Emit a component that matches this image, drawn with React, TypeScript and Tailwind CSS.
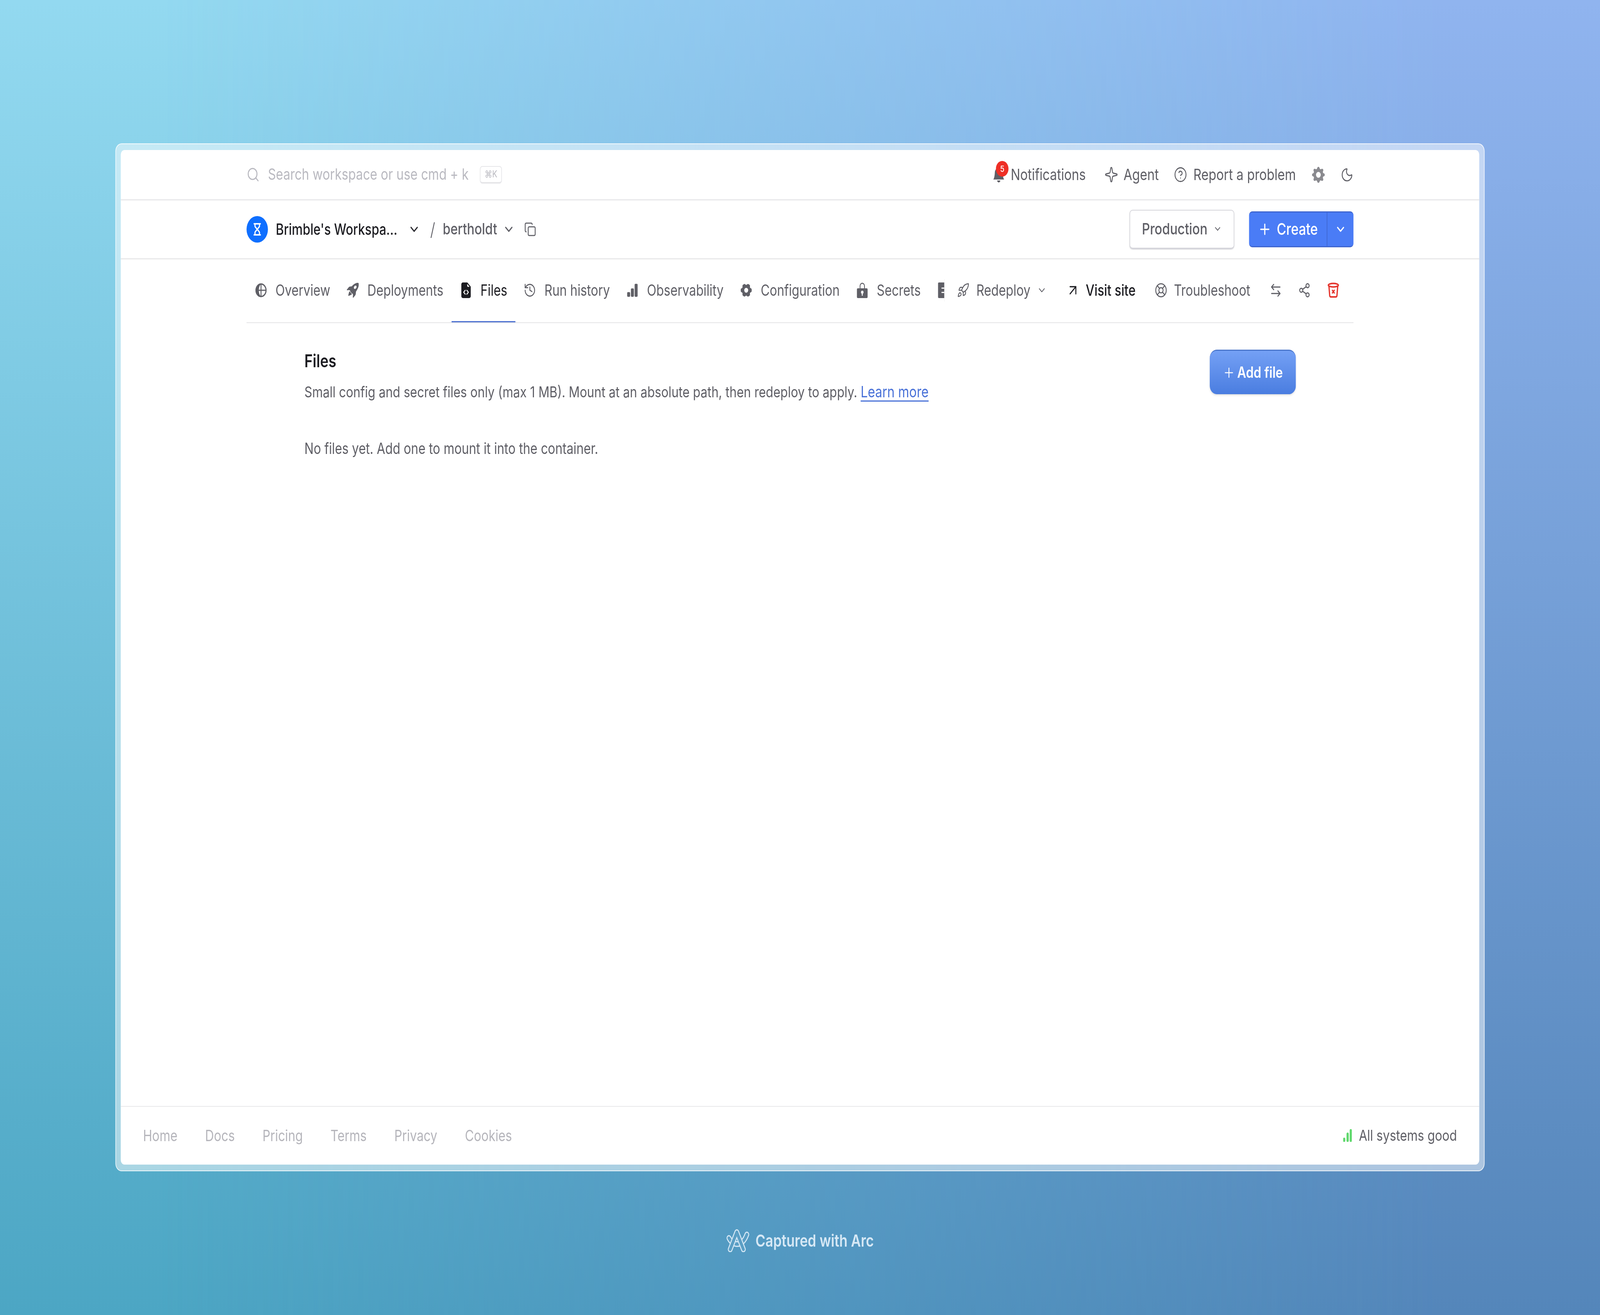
import React from 'react'
import {
  ArrowLeftRight,
  ArrowUpRight,
  ChevronDown,
  CircleHelp,
  Copy,
  History,
  Hourglass,
  LifeBuoy,
  Moon,
  Plus,
  Rocket,
  Search,
  Share2,
  Sparkle,
} from 'lucide-react'
import {
  BsBarChartFill,
  BsBellFill,
  BsFileEarmarkCodeFill,
  BsGearFill,
  BsRocketTakeoffFill,
} from 'react-icons/bs'
import { PiGearSixFill } from 'react-icons/pi'

// The layout is written for the 5088px reference. The headless window can come up
// narrower (4096px was measured), so the page is fitted horizontally to the real width.
const DESIGN_WIDTH = 5088

const Globe = () => (
  <svg viewBox="0 0 40 40" className="w-[40px] h-[40px]">
    <circle cx="20" cy="20" r="16" fill="none" stroke="#5f5f66" strokeWidth="3.5" />
    <path d="M20 4a16 16 0 0 0 0 32c-5-4-7-10-7-16s2-12 7-16z" fill="#5f5f66" />
    <path d="M4 20h32M20 4v32" stroke="#5f5f66" strokeWidth="3" />
  </svg>
)

const LockFill = () => (
  <svg viewBox="0 0 40 40" className="w-[40px] h-[40px]">
    <path d="M13 16V9a7 7 0 0 1 14 0v7" fill="none" stroke="#5f5f66" strokeWidth="2.5" />
    <rect x="3" y="15" width="34" height="25" rx="3" fill="#5f5f66" />
    <circle cx="20" cy="25" r="4" fill="#fff" />
    <rect x="18.5" y="26" width="3" height="8" fill="#fff" />
  </svg>
)

const Trash = () => (
  <svg viewBox="0 0 40 40" className="w-[40px] h-[40px]" fill="none" stroke="#e5352d">
    <ellipse cx="20" cy="7" rx="16" ry="4.5" strokeWidth="4" />
    <path d="M6 9l2.5 25a4 4 0 0 0 4 3h15a4 4 0 0 0 4-3L34 9" strokeWidth="4" />
    <path d="M16 19l8 9M24 19l-8 9" strokeWidth="3.5" />
  </svg>
)

const Tab = ({ icon, label, active }: { icon: React.ReactNode; label: string; active?: boolean }) => (
  <div
    className={
      'flex items-center gap-[26px] px-[26px] border-b-[3px] whitespace-nowrap ' +
      (active ? 'border-[#4a6fd0] text-[#1c1c21]' : 'border-transparent text-[#5f5f66]')
    }
  >
    <span className="w-[40px] h-[40px] flex items-center justify-center">{icon}</span>
    <span>{label}</span>
  </div>
)

const App = () => {
  const fit = Math.min(1, window.innerWidth / DESIGN_WIDTH)

  return (
    <div className="w-full h-screen overflow-hidden">
      <div
        className="relative w-[5088px] h-[3366px] origin-top-left overflow-hidden bg-[linear-gradient(to_bottom,#93d9f0,#4ca6c4)] font-['Inter',sans-serif] text-[39px] whitespace-nowrap"
        style={{ transform: `scaleX(${fit})` }}
      >
        <div className="absolute inset-0 bg-[linear-gradient(to_bottom,#90b4ef,#5486ba)] [mask-image:linear-gradient(to_right,transparent_10%,black_90%)]" />

        <div className="relative flex flex-col items-center pt-[367px]">
          <div className="w-[4354px] h-[2631px] p-[15px] rounded-[20px] border-[2px] border-white/80 bg-white/50">
            <div className="w-full h-full flex flex-col bg-white rounded-[12px] text-[#5f5f66]">
              {/* top bar */}
              <div className="h-[129px] shrink-0 flex items-center justify-between px-[400px] border-b-[3px] border-[#e8e8ea]">
                <div className="flex items-center text-[#b9b9c0]">
                  <Search size={42} strokeWidth={1.8} />
                  <span className="ml-[26px] text-[39.5px]">Search workspace or use cmd + k</span>
                  <span className="ml-[36px] w-[70px] h-[45px] rounded-[8px] border-[2px] border-b-[4px] border-[#e6e6e9] flex items-center justify-center text-[24px] text-[#b9b9c0]">
                    ⌘K
                  </span>
                </div>
                <div className="flex items-center text-[40px]">
                  <div className="relative w-[40px] h-[40px] flex items-center">
                    <BsBellFill size={40} color="#5f5f66" />
                    <span className="absolute -top-[15px] left-[11px] w-[40px] h-[40px] rounded-full bg-[#ee2f26] text-white text-[22px] font-medium flex items-center justify-center">
                      5
                    </span>
                  </div>
                  <span className="ml-[18px]">Notifications</span>
                  <Sparkle className="ml-[59px]" size={44} strokeWidth={1.6} />
                  <span className="ml-[17px]">Agent</span>
                  <CircleHelp className="ml-[48px]" size={42} strokeWidth={1.6} />
                  <span className="ml-[20px]">Report a problem</span>
                  <BsGearFill className="ml-[51px]" size={41} color="#8a8a8f" />
                  <Moon className="ml-[50px]" size={41} strokeWidth={1.7} />
                </div>
              </div>

              {/* workspace bar */}
              <div className="h-[151px] shrink-0 flex items-center justify-between px-[400px] border-b-[3px] border-[#e8e8ea]">
                <div className="flex items-center">
                  <span className="w-[68px] h-[68px] rounded-full bg-[#0f6fff] flex items-center justify-center">
                    <Hourglass size={34} color="#fff" strokeWidth={2.6} />
                  </span>
                  <span className="ml-[25px] w-[384px] font-medium text-[#1c1c21]">Brimble's Workspa...</span>
                  <ChevronDown className="ml-[36px]" size={40} strokeWidth={2} color="#2a2a30" />
                  <span className="ml-[31px] text-[46px] font-light">/</span>
                  <span className="ml-[24px] w-[176px] text-[39.5px] font-medium">bertholdt</span>
                  <ChevronDown className="ml-[14px]" size={40} strokeWidth={2} />
                  <Copy className="ml-[29px]" size={38} strokeWidth={1.8} />
                </div>
                <div className="flex items-center">
                  <div className="w-[333px] h-[101px] flex items-center justify-center gap-[18px] rounded-[10px] border-[2px] border-b-[4px] border-[#d6d6dc] text-[40px] font-medium shadow-sm">
                    Production
                    <ChevronDown size={28} strokeWidth={2} />
                  </div>
                  <div className="ml-[47px] w-[332px] h-[92px] flex rounded-[10px] bg-[#4a7cf6] border-t-[3px] border-b-[3px] border-[#3f66cf] text-white text-[41px] font-medium">
                    <div className="w-[249px] flex items-center justify-center gap-[16px] border-r-[2px] border-[#3f66cf]">
                      <Plus size={44} strokeWidth={2} />
                      Create
                    </div>
                    <div className="flex-1 flex items-center justify-center">
                      <ChevronDown size={38} strokeWidth={2.2} />
                    </div>
                  </div>
                </div>
              </div>

              {/* tabs */}
              <div className="mx-[400px] h-[163px] shrink-0 flex items-stretch border-b-[2px] border-[#e4e4e6] text-[#5f5f66]">
                <Tab icon={<Globe />} label="Overview" />
                <Tab icon={<BsRocketTakeoffFill size={38} color="#5f5f66" />} label="Deployments" />
                <Tab icon={<BsFileEarmarkCodeFill size={40} color="#1c1c21" />} label="Files" active />
                <Tab icon={<History size={40} strokeWidth={1.7} />} label="Run history" />
                <Tab icon={<BsBarChartFill size={38} color="#5f5f66" />} label="Observability" />
                <Tab icon={<PiGearSixFill size={46} color="#5f5f66" />} label="Configuration" />
                <Tab icon={<LockFill />} label="Secrets" />
                <div className="flex items-center pl-[29px] pb-[3px]">
                  <div className="w-[20px] h-[40px] bg-[#5f5f66] rounded-l-[3px] flex items-center justify-end overflow-hidden">
                    <span className="w-[9px] h-[14px] border-y-[3px] border-white" />
                  </div>
                  <div className="w-px h-[58px] bg-[#eeeeee]" />
                  <Rocket className="ml-[39px]" size={40} strokeWidth={1.6} />
                  <span className="ml-[22px]">Redeploy</span>
                  <ChevronDown className="ml-[20px]" size={32} strokeWidth={1.8} />
                  <ArrowUpRight className="ml-[61px] text-[#1c1c21]" size={44} strokeWidth={1.7} />
                  <span className="ml-[19px] font-medium text-[#1c1c21]">Visit site</span>
                  <LifeBuoy className="ml-[61px]" size={40} strokeWidth={1.7} />
                  <span className="ml-[21px]">Troubleshoot</span>
                  <ArrowLeftRight className="ml-[61px]" size={40} strokeWidth={1.8} />
                  <Share2 className="ml-[51px]" size={40} strokeWidth={1.8} />
                  <span className="ml-[52px]">
                    <Trash />
                  </span>
                </div>
              </div>

              {/* content */}
              <div className="flex-1 pl-[584px] pr-[583px] pt-[68px]">
                <div className="flex justify-between items-start">
                  <div>
                    <div className="h-[58px] flex items-center text-[45px] font-semibold text-[#1c1c21]">Files</div>
                    <div className="mt-[21px] h-[58px] flex items-center whitespace-pre text-[38.7px]">
                      Small config and secret files only (max 1 MB). Mount at an absolute path, then redeploy to apply.{' '}
                      <span className="text-[#4a72d8] text-[40px] underline underline-offset-[8px] decoration-[3px]">Learn more</span>
                    </div>
                  </div>
                  <div className="w-[274px] h-[114px] flex items-center justify-center gap-[6px] rounded-[22px] border-t-[3px] border-[#4d78cc] bg-gradient-to-b from-[#74a0f5] to-[#4a7de0] text-white font-semibold shadow-md">
                    <Plus size={40} strokeWidth={1.6} />
                    Add file
                  </div>
                </div>
                <div className="mt-[87px] h-[58px] flex items-center">No files yet. Add one to mount it into the container.</div>
              </div>

              {/* footer */}
              <div className="h-[150px] shrink-0 flex items-center justify-between px-[71px] border-t-[2px] border-[#e8e8ea]">
                <div className="flex items-center gap-[88px] text-[#b5b5bb]">
                  <span>Home</span>
                  <span>Docs</span>
                  <span>Pricing</span>
                  <span>Terms</span>
                  <span>Privacy</span>
                  <span>Cookies</span>
                </div>
                <div className="flex items-center gap-[22px] text-[38.6px]">
                  <svg viewBox="0 0 28 33" className="w-[28px] h-[33px]" fill="#5fd86c">
                    <rect x="0" y="22" width="7" height="11" rx="3.5" />
                    <rect x="11" y="9" width="7" height="24" rx="3.5" />
                    <rect x="21" y="0" width="7" height="33" rx="3.5" />
                  </svg>
                  <span>All systems good</span>
                </div>
              </div>
            </div>
          </div>

          {/* capture caption */}
          <div className="mt-[145px] flex items-center gap-[19px] text-[#d6e8f5] text-[43px] font-semibold">
            <svg viewBox="0 0 74 60" className="w-[74px] h-[60px]" fill="none" strokeLinecap="round" strokeLinejoin="round">
              <path d="M9 24C20 42 50 50 66 15" stroke="#d6e8f5" strokeWidth="15" />
              <path d="M9 24C20 42 50 50 66 15" stroke="#5b9fc5" strokeWidth="9" />
              <path d="M13 53L34 9L55 53" stroke="#d6e8f5" strokeWidth="15" />
              <path d="M13 53L34 9L55 53" stroke="#5b9fc5" strokeWidth="9" />
            </svg>
            Captured with Arc
          </div>
        </div>
      </div>
    </div>
  )
}

export default App
